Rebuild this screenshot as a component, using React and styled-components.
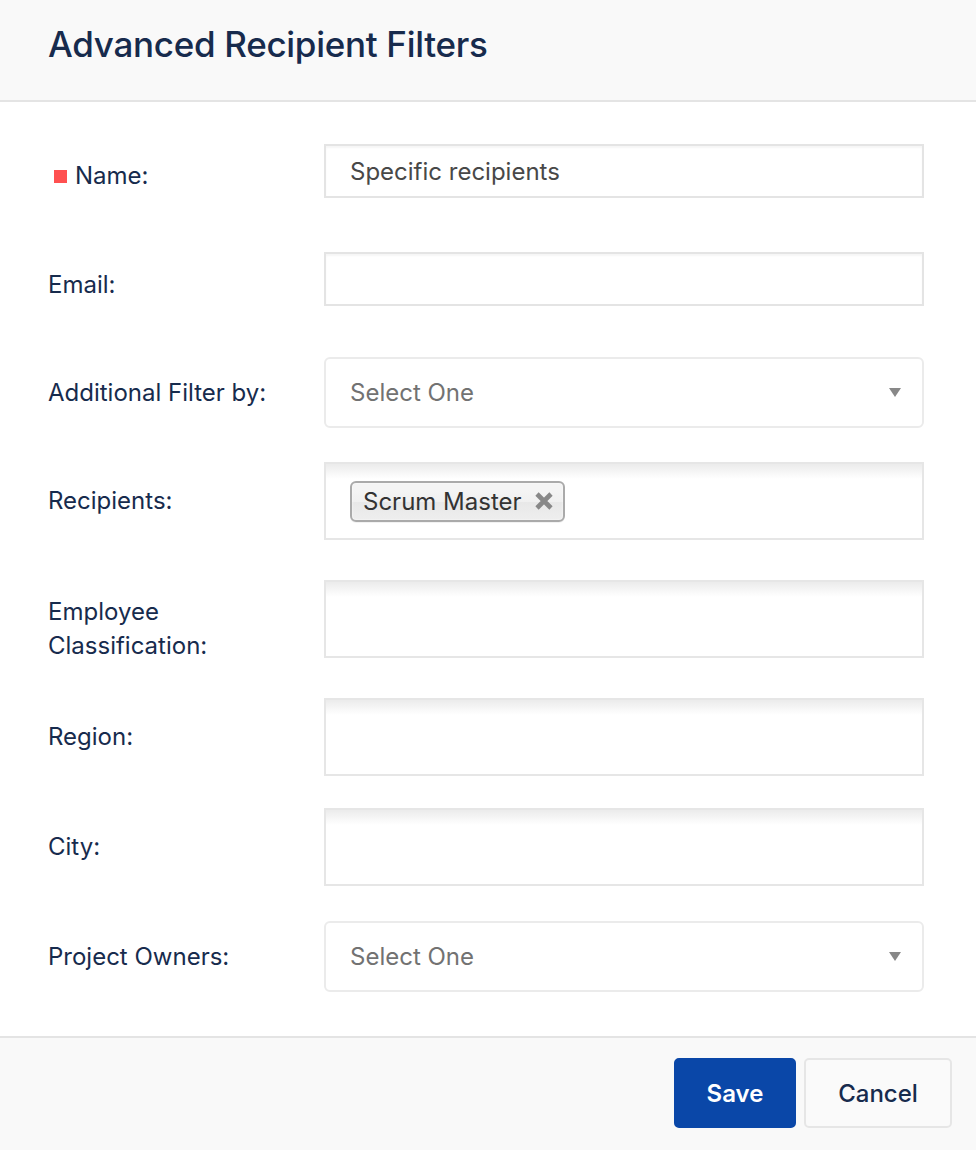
import React from "react";
import styled, { createGlobalStyle } from "styled-components";

const GlobalStyle = createGlobalStyle`
  html, body {
    margin: 0;
    padding: 0;
    background: #ffffff;
  }
  body {
    font-family: Inter, "Open Sans", "Liberation Sans", sans-serif;
    -webkit-font-smoothing: antialiased;
  }
  * { box-sizing: border-box; }
`;

const Dialog = styled.div`
  width: 976px;
  min-height: 1150px;
  display: flex;
  flex-direction: column;
  background: #fff;
`;

const Header = styled.header`
  height: 102px;
  background: #f9f9f9;
  border-bottom: 2px solid #e4e4e4;
  padding: 0 48px;
  display: flex;
  align-items: center;
`;

const Title = styled.h1`
  margin: 0 0 12px;
  font-size: 35px;
  font-weight: 500;
  color: #172b4d;
  letter-spacing: -0.3px;
`;

const Body = styled.div`
  flex: 1;
  padding: 0 52px 0 48px;
  display: flex;
  flex-direction: column;
`;

const Row = styled.div`
  display: grid;
  grid-template-columns: 276px 600px;
  align-items: center;
  margin-top: ${(p) => p.$mt}px;
`;

const Label = styled.label`
  display: flex;
  align-items: center;
  font-size: 24px;
  line-height: 34px;
  color: #172b4d;
  margin-top: ${(p) => p.$offset || 0}px;
  margin-bottom: ${(p) => -(p.$offset || 0)}px;
`;

const Required = styled.span`
  width: 13px;
  height: 13px;
  background: #ff5050;
  margin: 0 8px 0 6px;
  flex: none;
`;

const TextInput = styled.div`
  height: 54px;
  border: 2px solid #e4e4e4;
  box-shadow: inset 0 2px 2px rgba(0, 0, 0, 0.04);
  padding: 0 24px;
  display: flex;
  align-items: center;
  font-size: 24px;
  color: #484848;
`;

const SelectBox = styled.div`
  height: 71px;
  border: 2px solid #ebebeb;
  border-radius: 6px;
  padding: 0 20px 0 24px;
  display: flex;
  align-items: center;
  justify-content: space-between;
  font-size: 24px;
  color: #727272;
  background: #fff;
`;

const Arrow = styled.span`
  width: 0;
  height: 0;
  border-left: 6.5px solid transparent;
  border-right: 6.5px solid transparent;
  border-top: 9px solid #888;
  margin-right: 1px;
`;

const ChoiceBox = styled.div`
  height: 78px;
  border: 2px solid #e6e6e6;
  background-image: linear-gradient(#ececec 1%, #ffffff 20%);
  padding: 0 24px;
  display: flex;
  align-items: center;
  gap: 8px;
`;

const Tag = styled.span`
  height: 41px;
  display: inline-flex;
  align-items: center;
  gap: 13px;
  padding: 0 10px 0 11px;
  border: 2px solid #aaaaaa;
  border-radius: 6px;
  background-image: linear-gradient(#f4f4f4 20%, #f0f0f0 50%, #e8e8e8 52%, #eeeeee 100%);
  box-shadow: 0 0 2px #fff inset, 0 1px 0 rgba(0, 0, 0, 0.05);
  font-size: 24px;
  color: #333;
`;

const TagClose = styled.svg`
  width: 18px;
  height: 18px;
  flex: none;
`;

const Footer = styled.footer`
  margin-top: 44px;
  height: 114px;
  background: #f9f9f9;
  border-top: 2px solid #e4e4e4;
  padding: 20px 24px 0;
  display: flex;
  justify-content: flex-end;
  align-items: flex-start;
  gap: 8px;
`;

const Button = styled.button`
  height: 70px;
  padding: 0;
  width: ${(p) => p.$w}px;
  border-radius: 5px;
  font-family: inherit;
  font-size: 24px;
  cursor: pointer;
  background: ${(p) => (p.$primary ? "#0a47a8" : "#fafafa")};
  color: ${(p) => (p.$primary ? "#ffffff" : "#172b4d")};
  font-weight: ${(p) => (p.$primary ? 600 : 500)};
  border: 2px solid ${(p) => (p.$primary ? "#0a47a8" : "#e6e6e6")};
`;

const rows = [
  { label: "Email:", kind: "input", mt: 54, offset: 6 },
  { label: "Additional Filter by:", kind: "select", mt: 51 },
  { label: "Recipients:", kind: "tags", mt: 34 },
  { label: ["Employee", "Classification:"], kind: "box", mt: 40, offset: 10 },
  { label: "Region:", kind: "box", mt: 40 },
  { label: "City:", kind: "box", mt: 32 },
  { label: "Project Owners:", kind: "select", mt: 35 },
];

function Field({ kind }) {
  if (kind === "input") return <TextInput />;
  if (kind === "select")
    return (
      <SelectBox>
        Select One
        <Arrow />
      </SelectBox>
    );
  if (kind === "tags")
    return (
      <ChoiceBox>
        <Tag>
          Scrum Master
          <TagClose viewBox="0 0 18 18">
            <path d="M2 2 L16 16 M16 2 L2 16" stroke="#888" strokeWidth="4.6" strokeLinecap="butt" />
          </TagClose>
        </Tag>
      </ChoiceBox>
    );
  return <ChoiceBox />;
}

export default function App() {
  return (
    <>
      <GlobalStyle />
      <Dialog>
        <Header>
          <Title>Advanced Recipient Filters</Title>
        </Header>
        <Body>
          <Row $mt={42}>
            <Label $offset={5}>
              <Required />
              Name:
            </Label>
            <TextInput>Specific recipients</TextInput>
          </Row>
          {rows.map((r, i) => (
            <Row key={i} $mt={r.mt}>
              <Label $offset={r.offset}>
                {Array.isArray(r.label) ? (
                  <span>
                    {r.label[0]}
                    <br />
                    {r.label[1]}
                  </span>
                ) : (
                  r.label
                )}
              </Label>
              <Field kind={r.kind} />
            </Row>
          ))}
        </Body>
        <Footer>
          <Button $primary $w={122}>Save</Button>
          <Button $w={148}>Cancel</Button>
        </Footer>
      </Dialog>
    </>
  );
}
